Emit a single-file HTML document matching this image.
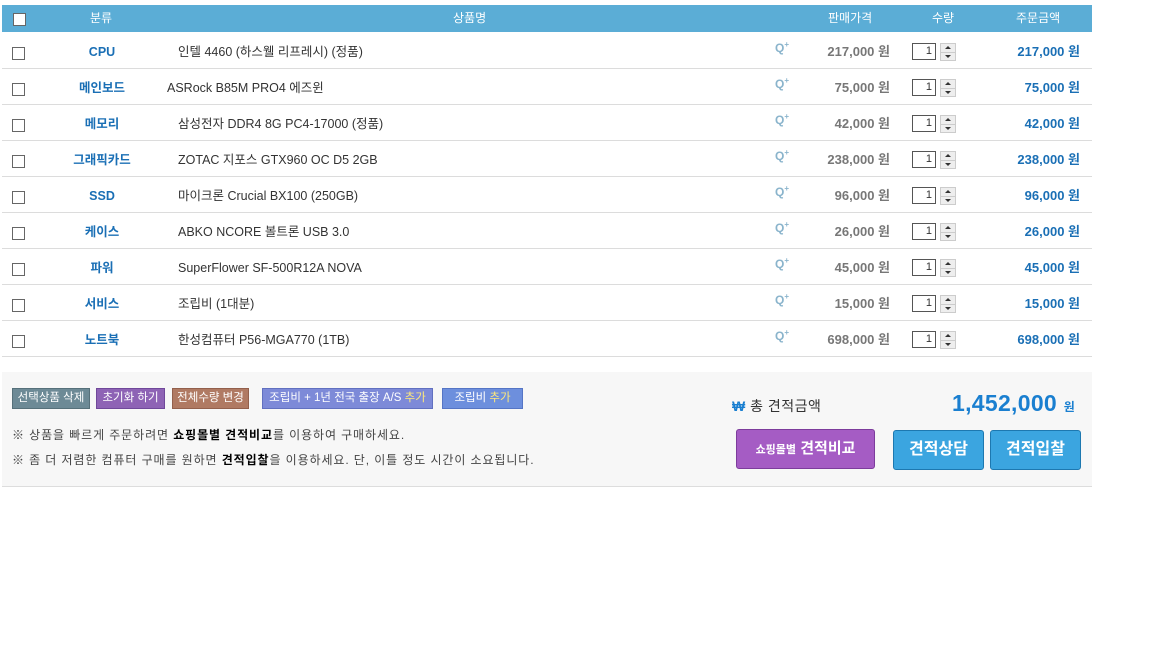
<!DOCTYPE html>
<html><head><meta charset="utf-8"><style>
*{margin:0;padding:0;box-sizing:border-box}
body{width:1152px;height:648px;background:#fff;font-family:"Liberation Sans","Noto Sans CJK KR",sans-serif;font-size:12px;color:#333;position:relative;overflow:hidden}
.a{position:absolute;white-space:nowrap}
.hd{position:absolute;left:2px;top:5px;width:1090px;height:27px;background:#5badd6;color:#fff;font-size:12px;line-height:27px}
.hd span{top:0}
.cb{position:absolute;width:13px;height:13px;border:1px solid #666;background:#fff}
.row{position:absolute;left:2px;width:1090px;height:36px;border-bottom:1px solid #dcdcdc}
.row>div{line-height:34px;height:34px;top:2px;white-space:nowrap}
.row>.cb{top:14px;height:13px;line-height:13px}
.cat{position:absolute;left:40px;width:120px;text-align:center;color:#1a6fb5;font-weight:bold;font-size:12.5px}
.nm{position:absolute;font-size:12.5px;color:#333}
.row>.q{position:absolute;left:773px;top:-5px;color:#8ab4cc;font-weight:bold;font-size:12px}
.q sup{font-size:8px}
.pr{position:absolute;right:202px;color:#777;font-weight:bold;font-size:13px}
.tot{position:absolute;right:12px;color:#1a6fb5;font-weight:bold;font-size:13px}
.row>.inp{position:absolute;left:910px;top:10px;width:24px;height:17px;border:1px solid #555;text-align:right;padding-right:3px;font-size:11px;line-height:15px}
.row>.sp{position:absolute;left:938px;top:10px;width:16px;height:18px;border:1px solid #ccc;background:#eee}
.sp:before{content:"";position:absolute;left:4px;top:2px;border:3px solid transparent;border-bottom:3px solid #333;border-top:0}
.sp:after{content:"";position:absolute;left:4px;top:11px;border:3px solid transparent;border-top:3px solid #333;border-bottom:0}
.sp i{position:absolute;left:0;top:8px;width:14px;height:1px;background:#ccc}
.btn{position:absolute;top:388px;height:21px;color:#fff;font-size:11.5px;text-align:center;line-height:19px;border:1px solid;white-space:nowrap}
.bb{position:absolute;color:#fff;font-weight:bold;text-align:center;border-radius:3px}
</style></head><body>
<div class="hd">
<div class="cb" style="left:11px;top:8px"></div>
<span class="a" style="left:88px">분류</span>
<span class="a" style="left:451px">상품명</span>
<span class="a" style="left:826px">판매가격</span>
<span class="a" style="left:930px">수량</span>
<span class="a" style="left:1014px">주문금액</span>
</div>

<div class="row" style="top:33px"><div class="cb" style="left:10px"></div><div class="cat">CPU</div><div class="nm" style="left:176px">인텔 4460 (하스웰 리프레시) (정품)</div><div class="q">Q<sup>+</sup></div><div class="pr">217,000 원</div><div class="inp">1</div><div class="sp"><i></i></div><div class="tot">217,000 원</div></div>
<div class="row" style="top:69px"><div class="cb" style="left:10px"></div><div class="cat">메인보드</div><div class="nm" style="left:165px">ASRock B85M PRO4 에즈윈</div><div class="q">Q<sup>+</sup></div><div class="pr">75,000 원</div><div class="inp">1</div><div class="sp"><i></i></div><div class="tot">75,000 원</div></div>
<div class="row" style="top:105px"><div class="cb" style="left:10px"></div><div class="cat">메모리</div><div class="nm" style="left:176px">삼성전자 DDR4 8G PC4-17000 (정품)</div><div class="q">Q<sup>+</sup></div><div class="pr">42,000 원</div><div class="inp">1</div><div class="sp"><i></i></div><div class="tot">42,000 원</div></div>
<div class="row" style="top:141px"><div class="cb" style="left:10px"></div><div class="cat">그래픽카드</div><div class="nm" style="left:176px">ZOTAC 지포스 GTX960 OC D5 2GB</div><div class="q">Q<sup>+</sup></div><div class="pr">238,000 원</div><div class="inp">1</div><div class="sp"><i></i></div><div class="tot">238,000 원</div></div>
<div class="row" style="top:177px"><div class="cb" style="left:10px"></div><div class="cat">SSD</div><div class="nm" style="left:176px">마이크론 Crucial BX100 (250GB)</div><div class="q">Q<sup>+</sup></div><div class="pr">96,000 원</div><div class="inp">1</div><div class="sp"><i></i></div><div class="tot">96,000 원</div></div>
<div class="row" style="top:213px"><div class="cb" style="left:10px"></div><div class="cat">케이스</div><div class="nm" style="left:176px">ABKO NCORE 볼트론 USB 3.0</div><div class="q">Q<sup>+</sup></div><div class="pr">26,000 원</div><div class="inp">1</div><div class="sp"><i></i></div><div class="tot">26,000 원</div></div>
<div class="row" style="top:249px"><div class="cb" style="left:10px"></div><div class="cat">파워</div><div class="nm" style="left:176px">SuperFlower SF-500R12A NOVA</div><div class="q">Q<sup>+</sup></div><div class="pr">45,000 원</div><div class="inp">1</div><div class="sp"><i></i></div><div class="tot">45,000 원</div></div>
<div class="row" style="top:285px"><div class="cb" style="left:10px"></div><div class="cat">서비스</div><div class="nm" style="left:176px">조립비 (1대분)</div><div class="q">Q<sup>+</sup></div><div class="pr">15,000 원</div><div class="inp">1</div><div class="sp"><i></i></div><div class="tot">15,000 원</div></div>
<div class="row" style="top:321px"><div class="cb" style="left:10px"></div><div class="cat">노트북</div><div class="nm" style="left:176px">한성컴퓨터 P56-MGA770 (1TB)</div><div class="q">Q<sup>+</sup></div><div class="pr">698,000 원</div><div class="inp">1</div><div class="sp"><i></i></div><div class="tot">698,000 원</div></div>

<div class="a" style="left:2px;top:372px;width:1090px;height:115px;background:#f7f7f7;border-bottom:1px solid #ddd"></div>
<div class="btn" style="left:12px;width:78px;background:#6d8a96;border-color:#56707a">선택상품 삭제</div>
<div class="btn" style="left:96px;width:69px;background:#8e63b5;border-color:#70489a">초기화 하기</div>
<div class="btn" style="left:172px;width:77px;background:#b07a63;border-color:#93604c">전체수량 변경</div>
<div class="btn" style="left:262px;width:171px;background:#7d8ad8;border-color:#6170c0">조립비 + 1년 전국 출장 A/S <span style="color:#ffe97a">추가</span></div>
<div class="btn" style="left:442px;width:81px;background:#6d8fdd;border-color:#5575c5">조립비 <span style="color:#ffe97a">추가</span></div>
<div class="a" style="left:12px;top:426px;font-size:12px;color:#444;letter-spacing:.9px">※ 상품을 빠르게 주문하려면 <b style="color:#000">쇼핑몰별 견적비교</b>를 이용하여 구매하세요.</div>
<div class="a" style="left:12px;top:451px;font-size:12px;color:#444;letter-spacing:.9px">※ 좀 더 저렴한 컴퓨터 구매를 원하면 <b style="color:#000">견적입찰</b>을 이용하세요. 단, 이틀 정도 시간이 소요됩니다.</div>
<div class="a" style="left:732px;top:396px;font-size:14px;color:#333;letter-spacing:.5px"><b style="color:#1a7fd0">₩</b> 총 견적금액</div>
<div class="a" style="left:952px;top:390px;font-size:23px;font-weight:bold;color:#1a7fd0;letter-spacing:.3px">1,452,000 <span style="font-size:12px">원</span></div>
<div class="bb" style="left:736px;top:429px;width:139px;height:40px;background:#a55cc4;border:1px solid #7d3c9c;line-height:38px;font-size:15px"><span style="font-size:11px">쇼핑몰별</span> 견적비교</div>
<div class="bb" style="left:893px;top:430px;width:91px;height:40px;background:#3ba5e0;border:1px solid #1d78b0;line-height:38px;font-size:16px">견적상담</div>
<div class="bb" style="left:990px;top:430px;width:91px;height:40px;background:#3ba5e0;border:1px solid #1d78b0;line-height:38px;font-size:16px">견적입찰</div>
</body></html>
